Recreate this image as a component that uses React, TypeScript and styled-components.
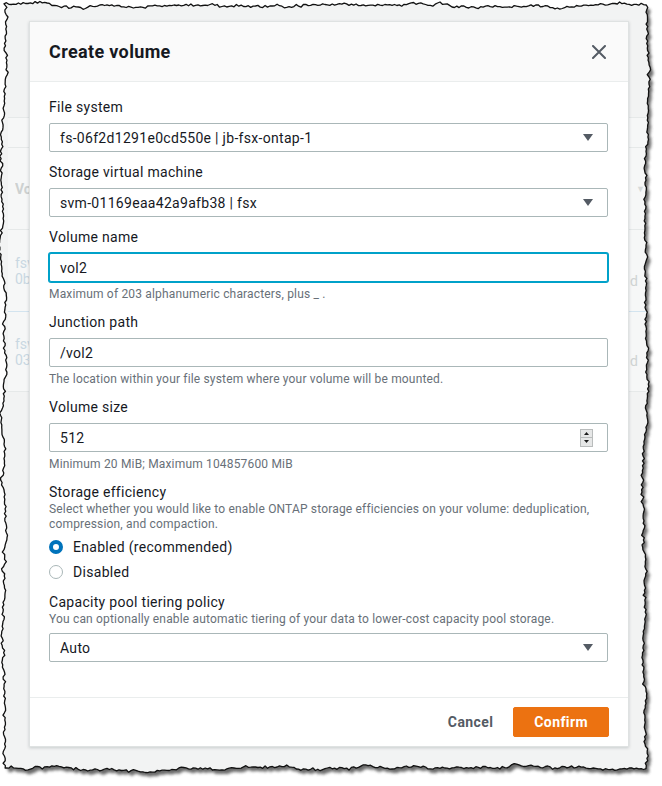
import React from "react";
import styled, {createGlobalStyle} from "styled-components";

const GlobalStyle = createGlobalStyle`
  html, body {
    margin: 0;
    padding: 0;
    background: #fff;
  }
`;

// torn paper edge, generated once with a fixed seed
const makeRand = (seed: number) => {
    let s = seed;
    return () => {
        s = (s * 16807) % 2147483647;
        return s / 2147483647;
    };
};

const tornPath = (): string => {
    const r = makeRand(11);
    const pts: [number, number][] = [];
    const side = (x0: number, y0: number, x1: number, y1: number, nx: number, ny: number) => {
        const len = Math.hypot(x1 - x0, y1 - y0);
        const n = Math.round(len / 2.4);
        let drift = 0;
        for (let i = 0; i < n; i++) {
            const t = i / n;
            drift += (r() - 0.5) * 1.3;
            drift *= 0.92;
            const o = drift * 1.8 + (r() - 0.5) * 2;
            pts.push([x0 + (x1 - x0) * t + nx * o, y0 + (y1 - y0) * t + ny * o]);
        }
    };
    side(4, 5, 646, 5, 0, 1);
    side(646, 5, 646, 768, 1, 0);
    side(646, 768, 4, 768, 0, 1);
    side(4, 768, 4, 5, 1, 0);
    return "M" + pts.map(p => p[0].toFixed(1) + " " + p[1].toFixed(1)).join(" L") + " Z";
};

const EDGE = tornPath();

const TornEdge = () => (
    <EdgeLayer width="662" height="786" viewBox="0 0 662 786">
        <defs>
            <filter id="edgeBlur" x="-5%" y="-5%" width="110%" height="110%">
                <feGaussianBlur stdDeviation="1.6"/>
            </filter>
            <mask id="outside">
                <rect x="0" y="0" width="662" height="786" fill="#fff"/>
                <path d={EDGE} fill="#000"/>
            </mask>
        </defs>
        <path d={`M0 0 H662 V786 H0 Z ${EDGE}`} fill="#fff" fillRule="evenodd"/>
        <g mask="url(#outside)">
            <path d={EDGE} fill="#444" opacity="0.8" transform="translate(3 4)" filter="url(#edgeBlur)"/>
        </g>
        <path d={EDGE} fill="none" stroke="#111" strokeWidth="1.3" strokeLinejoin="round"/>
    </EdgeLayer>
);

const Caret = () => (
    <svg width="10" height="7" viewBox="0 0 10 7">
        <path d="M0 0 H10 L5 7 Z" fill="#545b64"/>
    </svg>
);

const CloseIcon = () => (
    <svg width="14" height="14" viewBox="0 0 14 14">
        <path d="M1 1 L13 13 M13 1 L1 13" stroke="#545b64" strokeWidth="2" strokeLinecap="round"/>
    </svg>
);

const SpinArrow = ({up}: { up?: boolean }) => (
    <svg width="5" height="3" viewBox="0 0 5 3">
        <path d={up ? "M0 3 H5 L2.5 0 Z" : "M0 0 H5 L2.5 3 Z"} fill="#1b1b1b"/>
    </svg>
);

export default function App() {
    return <Screen>
        <GlobalStyle/>
        <BackPage>
            <BackTable>
                <BackRow $h={30}/>
                <BackRow $h={82}>
                    <BackHead>Volume ID</BackHead>
                    <BackSort>▼</BackSort>
                </BackRow>
                <BackRow $h={82} $line="#d3e4ef">
                    <BackLink>fsvol-<br/>0b3c1f2e7a9d</BackLink>
                    <BackCell>Created</BackCell>
                </BackRow>
                <BackRow $h={80}>
                    <BackLink>fsvol-<br/>03a8e51c6d20</BackLink>
                    <BackCell>Created</BackCell>
                </BackRow>
            </BackTable>
        </BackPage>

        <Modal>
            <ModalHeader>
                <Title>Create volume</Title>
                <CloseButton aria-label="Close"><CloseIcon/></CloseButton>
            </ModalHeader>
            <ModalBody>
                <Field>
                    <Label>File system</Label>
                    <Control>
                        <Value>fs-06f2d1291e0cd550e | jb-fsx-ontap-1</Value>
                        <Caret/>
                    </Control>
                </Field>
                <Field>
                    <Label>Storage virtual machine</Label>
                    <Control>
                        <Value>svm-01169eaa42a9afb38 | fsx</Value>
                        <Caret/>
                    </Control>
                </Field>
                <Field>
                    <Label>Volume name</Label>
                    <Control $focused>
                        <Value>vol2</Value>
                    </Control>
                    <Hint>Maximum of 203 alphanumeric characters, plus _ .</Hint>
                </Field>
                <Field>
                    <Label>Junction path</Label>
                    <Control>
                        <Value>/vol2</Value>
                    </Control>
                    <Hint>The location within your file system where your volume will be mounted.</Hint>
                </Field>
                <Field>
                    <Label>Volume size</Label>
                    <Control>
                        <Value>512</Value>
                        <Spinner>
                            <SpinHalf><SpinArrow up/></SpinHalf>
                            <SpinHalf><SpinArrow/></SpinHalf>
                        </Spinner>
                    </Control>
                    <Hint>Minimum 20 MiB; Maximum 104857600 MiB</Hint>
                </Field>
                <Field>
                    <Label>Storage efficiency</Label>
                    <Description>
                        Select whether you would like to enable ONTAP storage efficiencies on your volume: deduplication,
                        compression, and compaction.
                    </Description>
                    <RadioGroup>
                        <RadioRow>
                            <RadioDot $checked/>
                            <span>Enabled (recommended)</span>
                        </RadioRow>
                        <RadioRow>
                            <RadioDot/>
                            <span>Disabled</span>
                        </RadioRow>
                    </RadioGroup>
                </Field>
                <Field>
                    <Label>Capacity pool tiering policy</Label>
                    <Description>You can optionally enable automatic tiering of your data to lower-cost capacity pool storage.</Description>
                    <Control>
                        <Value>Auto</Value>
                        <Caret/>
                    </Control>
                </Field>
            </ModalBody>
            <ModalFooter>
                <TextButton>Cancel</TextButton>
                <PrimaryButton>Confirm</PrimaryButton>
            </ModalFooter>
        </Modal>

        <TornEdge/>
    </Screen>;
}

const Screen = styled.div`
  position: relative;
  width: 662px;
  height: 786px;
  overflow: hidden;
  background: #f2f3f3;
  font-family: Roboto, "Liberation Sans", Arial, sans-serif;
  color: #16191f;
`;

const EdgeLayer = styled.svg`
  position: absolute;
  inset: 0;
  pointer-events: none;
`;

const BackPage = styled.div`
  padding: 117px 0 0 8px;
`;

const BackTable = styled.div`
  width: 638px;
  background: #f6f7f7;
  border-top: 1px solid #e6e9e9;
`;

const BackRow = styled.div<{ $h?: number; $line?: string }>`
  height: ${p => p.$h ?? 40}px;
  box-sizing: border-box;
  display: flex;
  align-items: center;
  justify-content: space-between;
  padding: 0 0 0 7px;
  border-bottom: 1px solid ${p => p.$line ?? "#e6e9e9"};
  font-size: 14px;
  line-height: 16px;
`;

// only the edges of the background table show beside the dialog
const BackClip = styled.div`
  width: 14px;
  overflow: hidden;
  white-space: nowrap;
`;

const BackHead = styled(BackClip)`
  font-weight: 700;
  color: #cdd1d1;
`;

const BackLink = styled(BackClip)`
  color: #c9d7e2;
`;

const BackCell = styled.div`
  width: 8px;
  overflow: hidden;
  direction: rtl;
  color: #cfd3d3;
  align-self: flex-end;
  padding: 0 8px 22px 0;
`;

const BackSort = styled.div`
  font-size: 9px;
  color: #d6dada;
  padding-right: 1px;
`;

const Modal = styled.div`
  position: absolute;
  top: 21px;
  left: 29px;
  width: 600px;
  display: flex;
  flex-direction: column;
  background: #fff;
  border: 1px solid #dfe2e2;
  box-sizing: border-box;
  box-shadow: 0 1px 3px rgba(0, 28, 36, 0.18);
`;

const ModalHeader = styled.div`
  height: 59px;
  display: flex;
  align-items: center;
  justify-content: space-between;
  padding: 0 22px 0 19px;
  background: #fafafa;
  border-bottom: 1px solid #eaeded;
`;

const Title = styled.h2`
  margin: 0;
  font-size: 18px;
  font-weight: 700;
  line-height: 22px;
  letter-spacing: 0.35px;
  color: #16191f;
`;

const CloseButton = styled.button`
  display: flex;
  padding: 0;
  border: 0;
  background: none;
`;

const ModalBody = styled.div`
  display: flex;
  flex-direction: column;
  gap: 10px;
  padding: 15px 20px 35px 19px;
`;

const Field = styled.div`
  display: flex;
  flex-direction: column;
`;

const Label = styled.div`
  font-size: 14px;
  line-height: 20px;
  letter-spacing: 0.3px;
  color: #16191f;
  margin-bottom: 6px;

  & + div[data-desc] {
    margin-top: -6px;
  }
`;

const Description = styled.div.attrs({"data-desc": true})`
  font-size: 12px;
  line-height: 15px;
  letter-spacing: 0.17px;
  color: #687078;
  margin-bottom: 6px;
`;

const Control = styled.div<{ $focused?: boolean }>`
  height: 29px;
  box-sizing: border-box;
  display: flex;
  align-items: center;
  padding: 0 14px 0 10px;
  background: #fff;
  border: 1px solid ${p => (p.$focused ? "#00a1c9" : "#aab7b8")};
  box-shadow: ${p => (p.$focused ? "0 0 0 1px #00a1c9" : "none")};
  border-radius: 2px;
`;

const Value = styled.span`
  flex: 1;
  font-size: 14px;
  letter-spacing: 0.3px;
  color: #16191f;
`;

const Hint = styled.div`
  margin-top: 4px;
  font-size: 12px;
  line-height: 16px;
  letter-spacing: 0.17px;
  color: #687078;
`;

const Spinner = styled.div`
  width: 11px;
  height: 16px;
  display: flex;
  flex-direction: column;
  border: 1px solid #b9bcbc;
  background: #e6e7e7;
`;

const SpinHalf = styled.div`
  flex: 1;
  display: flex;
  align-items: center;
  justify-content: center;

  & + & {
    border-top: 1px solid #b9bcbc;
  }
`;

const RadioGroup = styled.div`
  display: flex;
  flex-direction: column;
  gap: 1px;
  margin: -3px 0 -2px;
`;

const RadioRow = styled.label`
  height: 24px;
  display: flex;
  align-items: center;
  gap: 10px;
  font-size: 14px;
  letter-spacing: 0.3px;
  color: #16191f;
`;

const RadioDot = styled.span<{ $checked?: boolean }>`
  width: 14px;
  height: 14px;
  box-sizing: border-box;
  border-radius: 50%;
  background: #fff;
  border: ${p => (p.$checked ? "4px solid #0073bb" : "1px solid #aab7b8")};
`;

const ModalFooter = styled.div`
  height: 48px;
  display: flex;
  align-items: center;
  justify-content: flex-end;
  padding: 0 19px;
  border-top: 1px solid #eaeded;
`;

const TextButton = styled.button`
  padding: 0 20px;
  height: 30px;
  border: 0;
  background: none;
  font-family: inherit;
  font-size: 14px;
  font-weight: 700;
  letter-spacing: 0.4px;
  color: #545b64;
`;

const PrimaryButton = styled.button`
  height: 30px;
  padding: 0 20px;
  border: 1px solid #ec7211;
  border-radius: 2px;
  background: #ec7211;
  font-family: inherit;
  font-size: 14px;
  font-weight: 700;
  letter-spacing: 0.4px;
  color: #fff;
`;
